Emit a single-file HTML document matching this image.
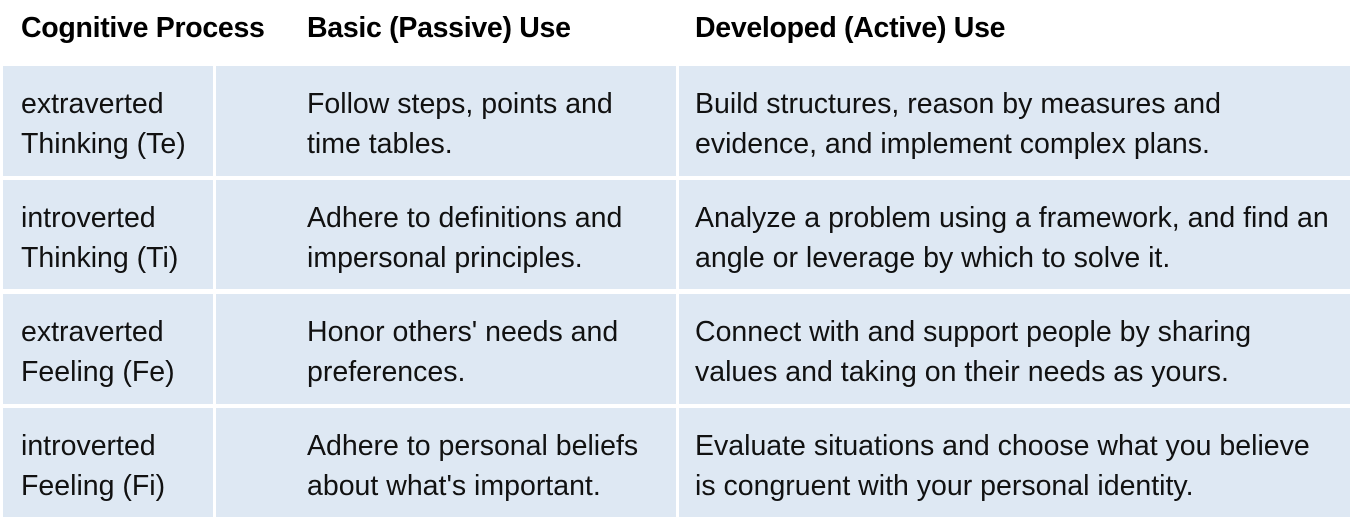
<!DOCTYPE html>
<html><head><style>
body{margin:0;width:1362px;height:520px;background:#fff;font-family:"Liberation Sans",sans-serif;position:relative;overflow:hidden}
.h{position:absolute;top:11px;font-size:28.5px;line-height:34px;font-weight:bold;color:#000;letter-spacing:-0.3px}
.c{position:absolute;background:#dee8f3;box-sizing:border-box;font-size:28.5px;line-height:40px;color:#111;padding-top:18px;white-space:nowrap}
</style></head><body>
<div class="h" style="left:21px">Cognitive Process</div>
<div class="h" style="left:307px">Basic (Passive) Use</div>
<div class="h" style="left:695px">Developed (Active) Use</div>

<div class="c" style="left:3px;top:66px;width:210px;height:110px;padding-left:18px">extraverted<br>Thinking (Te)</div>
<div class="c" style="left:216px;top:66px;width:460px;height:110px;padding-left:91px">Follow steps, points and<br>time tables.</div>
<div class="c" style="left:679px;top:66px;width:671px;height:110px;padding-left:16px">Build structures, reason by measures and<br>evidence, and implement complex plans.</div>

<div class="c" style="left:3px;top:180px;width:210px;height:109px;padding-left:18px">introverted<br>Thinking (Ti)</div>
<div class="c" style="left:216px;top:180px;width:460px;height:109px;padding-left:91px">Adhere to definitions and<br>impersonal principles.</div>
<div class="c" style="left:679px;top:180px;width:671px;height:109px;padding-left:16px">Analyze a problem using a framework, and find an<br>angle or leverage by which to solve it.</div>

<div class="c" style="left:3px;top:294px;width:210px;height:110px;padding-left:18px">extraverted<br>Feeling (Fe)</div>
<div class="c" style="left:216px;top:294px;width:460px;height:110px;padding-left:91px">Honor others' needs and<br>preferences.</div>
<div class="c" style="left:679px;top:294px;width:671px;height:110px;padding-left:16px">Connect with and support people by sharing<br>values and taking on their needs as yours.</div>

<div class="c" style="left:3px;top:408px;width:210px;height:109px;padding-left:18px">introverted<br>Feeling (Fi)</div>
<div class="c" style="left:216px;top:408px;width:460px;height:109px;padding-left:91px">Adhere to personal beliefs<br>about what's important.</div>
<div class="c" style="left:679px;top:408px;width:671px;height:109px;padding-left:16px">Evaluate situations and choose what you believe<br>is congruent with your personal identity.</div>
</body></html>
